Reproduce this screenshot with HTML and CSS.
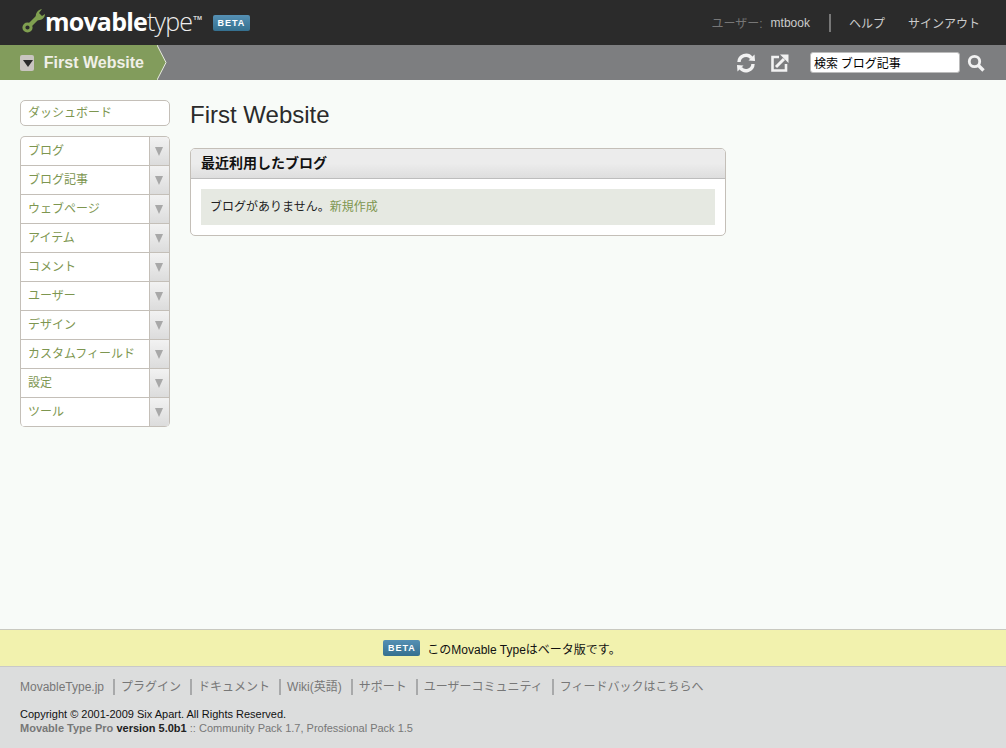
FILE: index.html
```html
<!DOCTYPE html>
<html lang="ja">
<head>
  <meta charset="UTF-8" />
  <title>First Website</title>
  <link rel="stylesheet" href="styles.css">
</head>
<body>
  <header class="top">
    <div class="brand">
      <svg class="wrench" width="24" height="26" viewBox="0 0 24 26">
        <circle cx="5.5" cy="19.5" r="3.6" fill="none" stroke="#80a050" stroke-width="3"/>
        <path d="M8 17 L16 9" stroke="#80a050" stroke-width="4.5" fill="none"/>
        <path d="M14 10 C13 6 15 2 20 1 L17 5 L20 8 L23 6 C23 10 19 13 15 12 Z" fill="#80a050"/>
      </svg>
      <span class="logo"><b>movable</b>type</span>
      <span class="tm">TM</span>
      <span class="beta top-beta">BETA</span>
    </div>
    <nav class="user-nav">
      <span class="user-label">ユーザー:</span>
      <a class="user-name">mtbook</a>
      <i class="user-sep"></i>
      <a class="help">ヘルプ</a>
      <a>サインアウト</a>
    </nav>
  </header>

  <div class="bar">
    <div class="site">
      <span class="site-toggle"></span>
      <span class="site-name">First Website</span>
      <svg class="site-arrow" width="10" height="35" viewBox="0 0 10 35">
        <path d="M0 0 L9 17.5 L0 35 Z" fill="#829c5c"/>
        <path d="M0 0 L9 17.5 L0 35" fill="none" stroke="#e8ece0" stroke-width="1"/>
      </svg>
    </div>
    <div class="tools">
      <svg class="tool-refresh" width="20" height="20" viewBox="0 0 20 20">
        <path d="M3 9 A7 7 0 0 1 15.5 5" fill="none" stroke="#f2f2f2" stroke-width="3.4"/>
        <path d="M12.5 7.5 L19 8 L18.5 1.5 Z" fill="#f2f2f2"/>
        <path d="M17 11 A7 7 0 0 1 4.5 15" fill="none" stroke="#f2f2f2" stroke-width="3.4"/>
        <path d="M7.5 12.5 L1 12 L1.5 18.5 Z" fill="#f2f2f2"/>
      </svg>
      <svg class="tool-view" width="18" height="18" viewBox="0 0 18 18">
        <path d="M8 3 H1.5 V16.5 H15 V10" fill="none" stroke="#f2f2f2" stroke-width="2.6"/>
        <path d="M5 13 L13 5" stroke="#f2f2f2" stroke-width="3" fill="none"/>
        <path d="M9 0.5 H17.5 V9 Z" fill="#f2f2f2"/>
      </svg>
      <input class="search" type="text" value="検索 ブログ記事">
      <svg class="tool-search" width="18" height="18" viewBox="0 0 18 18">
        <circle cx="7.5" cy="7.5" r="5.2" fill="none" stroke="#f2f2f2" stroke-width="2.8"/>
        <path d="M11.5 11.5 L16.5 16.5" stroke="#f2f2f2" stroke-width="3.4"/>
      </svg>
    </div>
  </div>

  <div class="page">
    <aside class="side">
      <a class="dashboard">ダッシュボード</a>
      <ul class="menu">
        <li><a>ブログ</a><span class="drop"></span></li>
        <li><a>ブログ記事</a><span class="drop"></span></li>
        <li><a>ウェブページ</a><span class="drop"></span></li>
        <li><a>アイテム</a><span class="drop"></span></li>
        <li><a>コメント</a><span class="drop"></span></li>
        <li><a>ユーザー</a><span class="drop"></span></li>
        <li><a>デザイン</a><span class="drop"></span></li>
        <li><a>カスタムフィールド</a><span class="drop"></span></li>
        <li><a>設定</a><span class="drop"></span></li>
        <li><a>ツール</a><span class="drop"></span></li>
      </ul>
    </aside>
    <main class="content">
      <h1>First Website</h1>
      <section class="panel">
        <h2>最近利用したブログ</h2>
        <div class="panel-body">
          <p class="msg">ブログがありません。<a>新規作成</a></p>
        </div>
      </section>
    </main>
  </div>

  <div class="notice">
    <span class="beta">BETA</span>
    <span>このMovable Typeはベータ版です。</span>
  </div>

  <footer class="foot">
    <nav class="foot-nav">
      <a>MovableType.jp</a>
      <a>プラグイン</a>
      <a>ドキュメント</a>
      <a>Wiki(英語)</a>
      <a>サポート</a>
      <a>ユーザーコミュニティ</a>
      <a>フィードバックはこちらへ</a>
    </nav>
    <p class="copy">Copyright © 2001-2009 Six Apart. All Rights Reserved.</p>
    <p class="version"><b class="product">Movable Type Pro</b> <b>version 5.0b1</b> :: <a>Community Pack 1.7</a>, <a>Professional Pack 1.5</a></p>
  </footer>
</body>
</html>
```

FILE: styles.css
```css
* {
  box-sizing: border-box;
}

html, body {
  height: 100%;
}

body {
  margin: 0;
  display: flex;
  flex-direction: column;
  min-height: 748px;
  background: #f8fbf8;
  color: #222;
  font-family: "Liberation Sans", "Noto Sans CJK JP", sans-serif;
  font-size: 12px;
}

ul, p, h1, h2 {
  margin: 0;
  padding: 0;
}

/* top bar */
.top {
  height: 45px;
  flex: none;
  display: flex;
  justify-content: space-between;
  align-items: center;
  padding: 0 26px 0 22px;
  background: #2b2b2b;
}

.brand {
  display: flex;
  align-items: center;
}

.wrench {
  margin-top: -3px;
}

.logo {
  margin: -3px 0 0 -1px;
  color: #eee;
  font-family: "Open Sans", sans-serif;
  font-size: 25px;
  font-weight: 300;
  letter-spacing: -0.8px;
}

.logo b {
  color: #fff;
  font-weight: 700;
}

.tm {
  align-self: flex-start;
  margin: 8px 0 0 1px;
  color: #ddd;
  font-size: 6px;
  font-weight: 700;
}

.beta {
  display: inline-block;
  width: 37px;
  height: 16px;
  border-radius: 2px;
  background: linear-gradient(#5590b4, #35708f);
  color: #fff;
  font-size: 9px;
  font-weight: 700;
  letter-spacing: 1px;
  line-height: 16px;
  text-align: center;
}

.top-beta {
  margin: 0 0 0 11px;
}

.user-nav {
  display: flex;
  align-items: center;
  color: #ccc;
}

.user-label {
  color: #777;
  margin-right: 8px;
}

.user-sep {
  width: 2px;
  height: 18px;
  margin: 0 18px 0 19px;
  background: #777;
}

.help {
  margin-right: 23px;
}

/* site bar */
.bar {
  height: 35px;
  flex: none;
  display: flex;
  justify-content: space-between;
  background: #7d7e80;
}

.site {
  display: flex;
  align-items: center;
  width: 167px;
  padding-left: 20px;
  background: linear-gradient(to right, #829c5c 158px, transparent 158px);
}

.site-toggle {
  position: relative;
  width: 16px;
  height: 16px;
  border-radius: 2px;
  background: #c9c5c0;
}

.site-toggle::after {
  content: "";
  position: absolute;
  left: 3px;
  top: 5px;
  border: 5px solid transparent;
  border-top: 7px solid #2b2b2b;
  border-bottom: 0;
}

.site-name {
  margin-left: 10px;
  color: #f0f0e8;
  font-size: 16px;
  font-weight: 700;
  white-space: nowrap;
}

.site-arrow {
  margin-left: 13px;
  flex: none;
}

.tools {
  display: flex;
  align-items: center;
  padding-right: 21px;
}

.tool-refresh {
  margin-right: 15px;
}

.search {
  width: 150px;
  height: 21px;
  margin: 0 7px 0 21px;
  padding: 0 3px;
  border: 1px solid #bbb;
  border-radius: 3px;
  background: #fff;
  color: #000;
  font-family: "Noto Sans CJK JP", sans-serif;
  font-size: 12px;
}

/* page */
.page {
  flex: 1;
  display: flex;
  gap: 20px;
  padding: 20px 20px 0;
}

.side {
  width: 150px;
  flex: none;
}

.dashboard {
  display: block;
  height: 26px;
  padding-left: 7px;
  border: 1px solid #c4bfb8;
  border-radius: 5px;
  background: #fff;
  color: #7d9650;
  line-height: 25px;
}

.menu {
  margin-top: 10px;
  list-style: none;
  border: 1px solid #c4bfb8;
  border-bottom-width: 0;
  border-radius: 5px;
  overflow: hidden;
  background: #fff;
}

.menu li {
  display: flex;
  justify-content: space-between;
  height: 29px;
  border-bottom: 1px solid #c4bfb8;
}

.menu a {
  padding-left: 7px;
  color: #7d9650;
  line-height: 28px;
}

.drop {
  position: relative;
  width: 20px;
  border-left: 1px solid #c4bfb8;
  background: linear-gradient(#f2f2f2, #dcdcdc);
}

.drop::after {
  content: "";
  position: absolute;
  left: 5px;
  top: 10px;
  border: 4px solid transparent;
  border-top: 9px solid #a8a8a8;
  border-bottom: 0;
}

.content {
  width: 536px;
}

h1 {
  margin-bottom: 19px;
  color: #2b2b2b;
  font-size: 24px;
  font-weight: 400;
  line-height: 29px;
}

.panel {
  height: 88px;
  border: 1px solid #c4bfb8;
  border-radius: 5px;
  background: #fff;
  overflow: hidden;
}

.panel h2 {
  height: 30px;
  padding-left: 10px;
  border-bottom: 1px solid #bdbdbd;
  background: linear-gradient(#ececec 50%, #dedede);
  color: #111;
  font-size: 14px;
  font-weight: 700;
  line-height: 28px;
}

.panel-body {
  padding: 10px;
}

.msg {
  height: 36px;
  padding-left: 9px;
  background: #e6e9e2;
  line-height: 36px;
}

.msg a {
  color: #7d9650;
}

/* footer */
.notice {
  height: 38px;
  flex: none;
  display: flex;
  justify-content: center;
  align-items: center;
  gap: 7px;
  padding-right: 2px;
  border-top: 1px solid #c9c9c0;
  border-bottom: 1px solid #c9c9c9;
  background: #f2f2ae;
  color: #111;
}

.foot {
  height: 81px;
  flex: none;
  padding: 12px 20px 0;
  background: #dcdddd;
  color: #777;
}

.foot-nav {
  display: flex;
  height: 16px;
  margin-bottom: 12px;
  line-height: 16px;
}

.foot-nav a {
  margin-right: 9px;
}

.foot-nav a + a {
  padding-left: 6px;
  border-left: 2px solid #a8a9aa;
}

.copy {
  color: #111;
  font-size: 11px;
  line-height: 14px;
}

.version {
  font-size: 11px;
  line-height: 14px;
}

.version b {
  color: #222;
}

.version .product {
  color: #777;
}
```
